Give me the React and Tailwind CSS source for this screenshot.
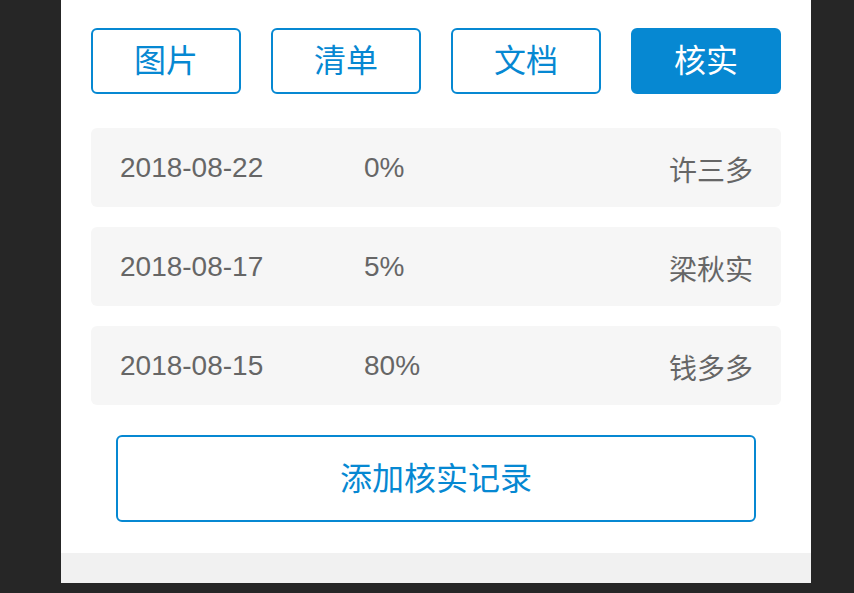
import React from "react";

const tabs = [
  { label: "图片", active: false },
  { label: "清单", active: false },
  { label: "文档", active: false },
  { label: "核实", active: true },
];

const records = [
  { date: "2018-08-22", rate: "0%", name: "许三多" },
  { date: "2018-08-17", rate: "5%", name: "梁秋实" },
  { date: "2018-08-15", rate: "80%", name: "钱多多" },
];

const font = {
  fontFamily: '"Liberation Sans", "Noto Sans CJK SC", sans-serif',
};

export default function App() {
  return (
    <div className="min-h-[593px] bg-[#262626]" style={font}>
      <div className="ml-[61px] w-[750px] bg-white">
        <div className="px-[30px] pt-[28px] pb-[31px]">
          {/* Tabs */}
          <div className="flex gap-[30px]">
            {tabs.map((t) => (
              <button
                key={t.label}
                className={
                  t.active
                    ? "flex h-[66px] w-[150px] items-center justify-center rounded-[6px] border-2 border-[#0688d2] bg-[#0688d2] text-[32px] text-white"
                    : "flex h-[66px] w-[150px] items-center justify-center rounded-[6px] border-2 border-[#0688d2] bg-white text-[32px] text-[#0688d2]"
                }
              >
                {t.label}
              </button>
            ))}
          </div>

          {/* Records */}
          <div className="mt-[34px] flex flex-col gap-[20px]">
            {records.map((r) => (
              <div
                key={r.date}
                className="flex h-[79px] items-center rounded-[6px] bg-[#f6f6f6] pl-[29px] pr-[28px] text-[28px] text-[#666666]"
              >
                <span className="w-[244px]">{r.date}</span>
                <span className="flex-1">{r.rate}</span>
                <span className="pt-[9px]">{r.name}</span>
              </div>
            ))}
          </div>

          {/* Add button */}
          <div className="mt-[30px] flex justify-center">
            <button className="flex h-[87px] w-[640px] items-center justify-center rounded-[6px] border-2 border-[#0688d2] bg-white text-[32px] text-[#0688d2]">
              添加核实记录
            </button>
          </div>
        </div>
        <div className="h-[30px] bg-[#f1f1f1]" />
      </div>
    </div>
  );
}
